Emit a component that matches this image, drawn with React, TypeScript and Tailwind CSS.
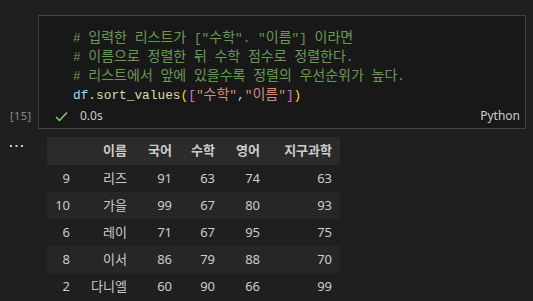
import React from "react";

const KO = /([\uAC00-\uD7A3\u3131-\u318E]+)/;

function Txt({ s }: { s: string }) {
  const parts = s.split(KO);
  return (
    <>
      {parts.map((p, i) =>
        i % 2 === 1 ? (
          <span key={i} className="font-['Noto_Sans_CJK_KR',sans-serif] text-[14px]">
            {p}
          </span>
        ) : (
          <span key={i} className="whitespace-pre">
            {p}
          </span>
        )
      )}
    </>
  );
}

type Tok = [string, string];

const lines: Tok[][] = [
  [["# 입력한 리스트가 [\"수학\". \"이름\"] 이라면", "text-[#6a9955]"]],
  [["# 이름으로 정렬한 뒤 수학 점수로 정렬한다.", "text-[#6a9955]"]],
  [["# 리스트에서 앞에 있을수록 정렬의 우선순위가 높다.", "text-[#6a9955]"]],
  [
    ["df", "text-[#9cdcfe]"],
    [".", "text-[#d4d4d4]"],
    ["sort_values", "text-[#dcdcaa]"],
    ["(", "text-[#ffd700]"],
    ["[", "text-[#da70d6]"],
    ["\"수학\"", "text-[#ce9178]"],
    [",", "text-[#d4d4d4]"],
    ["\"이름\"", "text-[#ce9178]"],
    ["]", "text-[#da70d6]"],
    [")", "text-[#ffd700]"],
  ],
];

const headers = ["", "이름", "국어", "수학", "영어", "지구과학"];
const rows = [
  ["9", "리즈", "91", "63", "74", "63"],
  ["10", "가을", "99", "67", "80", "93"],
  ["6", "레이", "71", "67", "95", "75"],
  ["8", "이서", "86", "79", "88", "70"],
  ["2", "다니엘", "60", "90", "66", "99"],
];

export default function App() {
  return (
    <div className="w-[533px] h-[301px] bg-[#1f1f1f] overflow-hidden pt-[15px] font-['Noto_Sans','Noto_Sans_CJK_KR',sans-serif]">
      {/* Cell */}
      <div className="flex">
        <div className="w-[38px] flex flex-col justify-end pb-[3px] pl-[10px]">
          <span className="text-[11px] leading-[20px] tracking-[0.4px] text-[#8a8a8a] font-['Noto_Sans',sans-serif]">
            [15]
          </span>
        </div>
        <div className="w-[488px] h-[114px] border border-[#424242] bg-[#181818] flex flex-col">
          <div className="pt-[11px] pl-[34px] font-['Liberation_Mono','Noto_Sans_CJK_KR',monospace] text-[12.8px]">
            {lines.map((ln, i) => (
              <div key={i} className="h-[19px] leading-[19px] whitespace-pre">
                {ln.map(([t, c], j) => (
                  <span key={j} className={c}>
                    <Txt s={t} />
                  </span>
                ))}
              </div>
            ))}
          </div>
          <div className="mt-auto h-[22px] mb-[1px] flex items-center pl-[16px] pr-[5px]">
            <svg width="13" height="11" viewBox="0 0 13 11" className="shrink-0">
              <path d="M1 6 L4.5 9.5 L12 1.5" fill="none" stroke="#89d185" strokeWidth="1.4" />
            </svg>
            <span className="ml-[12px] text-[12px] text-[#cccccc]">0.0s</span>
            <span className="ml-auto text-[12px] text-[#cccccc]">Python</span>
          </div>
        </div>
      </div>
      {/* Output */}
      <div className="flex mt-[8px]">
        <div className="w-[47px] pl-[10px] pt-[8px]">
          <svg width="14" height="3" viewBox="0 0 14 3">
            <rect x="0" y="0" width="2" height="2" fill="#cccccc" />
            <rect x="5.5" y="0" width="2" height="2" fill="#cccccc" />
            <rect x="11" y="0" width="2" height="2" fill="#cccccc" />
          </svg>
        </div>
        <div className="text-[13px] text-[#cccccc]">
          <div className="grid grid-cols-[31px_57px_45px_43px_45px_72px] h-[28px] items-center bg-[#2b2b2b] font-bold">
            {headers.map((h, i) => (
              <div key={i} className="text-right pr-[8px]">
                {h}
              </div>
            ))}
          </div>
          {rows.map((r, ri) => (
            <div
              key={ri}
              className={
                "grid grid-cols-[31px_57px_45px_43px_45px_72px] h-[27px] items-center " +
                (ri % 2 === 1 ? "bg-[#262626]" : "bg-[#1f1f1f]")
              }
            >
              {r.map((c, ci) => (
                <div key={ci} className="text-right pr-[8px]">
                  {c}
                </div>
              ))}
            </div>
          ))}
        </div>
      </div>
    </div>
  );
}
